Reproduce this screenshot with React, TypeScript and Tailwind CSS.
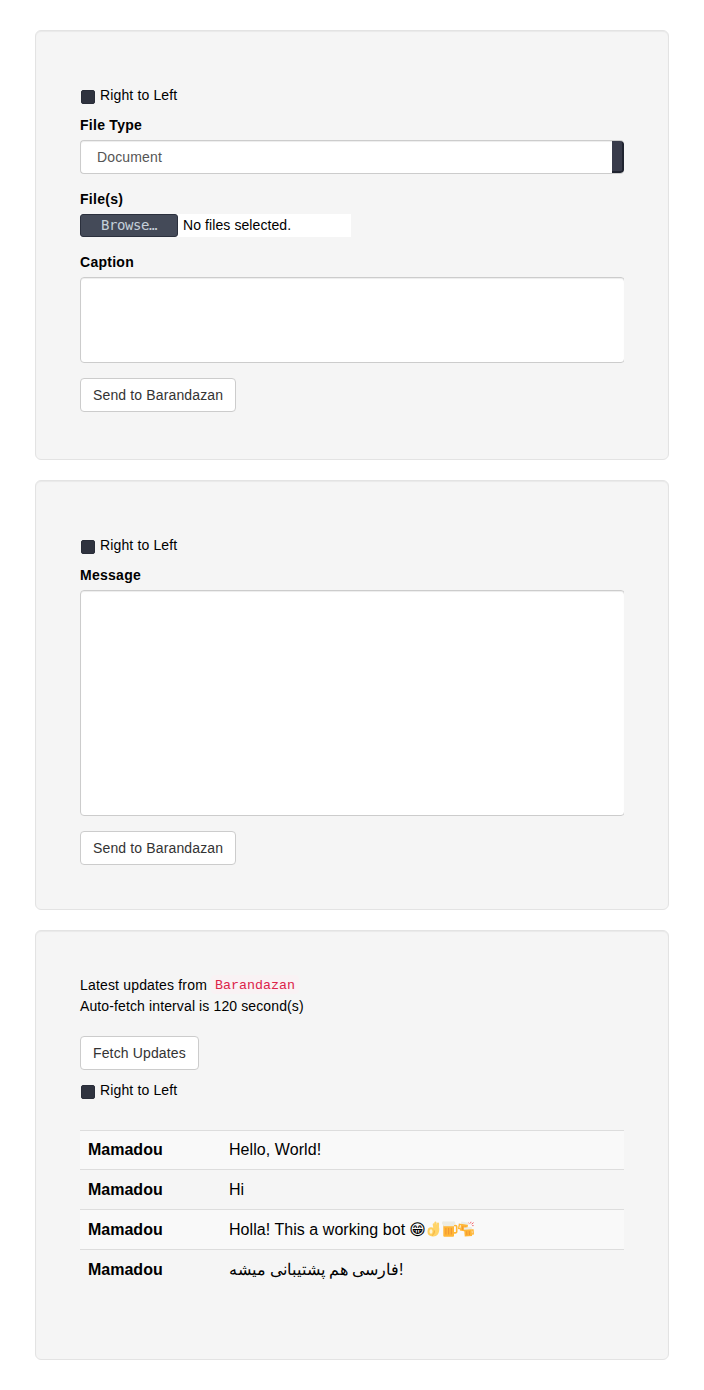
import type { ReactNode } from 'react';

function Card({ children }: { children: ReactNode }) {
  return (
    <section className="h-[430px] rounded-[6px] border border-[#e3e3e3] bg-[#f5f5f5] p-[44px] shadow-[inset_0_1px_1px_rgba(0,0,0,0.05)]">
      {children}
    </section>
  );
}

function Direction() {
  return (
    <div className="my-[10px] flex h-[20px]">
      <span className="mt-[5px] mr-[5px] ml-px size-[14px] rounded-[2px] border border-[#292d39] bg-[#2f333f]" />
      <span>Right to Left</span>
    </div>
  );
}

function Label({ children }: { children: ReactNode }) {
  return <div className="mb-[5px] font-bold tracking-[0.27px]">{children}</div>;
}

function Field({ height }: { height: string }) {
  return (
    <div className="mb-[15px] overflow-hidden">
      <div className={`${height} w-[545px] rounded-[4px] border border-[#ccc] bg-white shadow-[inset_0_1px_1px_rgba(0,0,0,0.075)]`} />
    </div>
  );
}

function Button({ children }: { children: ReactNode }) {
  return (
    <button className="block h-[34px] rounded-[4px] border border-[#ccc] bg-white px-[12px] tracking-[0.14px] text-[#333]">{children}</button>
  );
}

function OkHand() {
  return (
    <svg viewBox="0 0 16 16" className="size-[16px] shrink-0" role="img" aria-label="OK hand">
      <path
        d="M8.4 7.2L7.8 3.4M10.1 7L9.4 1.6M11.8 8L12 2.6"
        fill="none"
        stroke="#ffd469"
        strokeWidth="2.2"
        strokeLinecap="round"
      />
      <path d="M7.5 6.5h5.6c.6 3-.2 6.800-3.200 8.600-2 .9-4.900.6-6.200-1.200 2.300-1 4-3.500 3.800-7.400z" fill="#ffd469" />
      <ellipse cx="5" cy="10.500" rx="2.500" ry="3.300" fill="#fff3d0" stroke="#ffcf5c" strokeWidth="2" />
      <path d="M8.300 9.500c.3 2-.6 4-2.100 5" fill="none" stroke="#f0ad3d" strokeWidth=".9" />
    </svg>
  );
}

function BeerMug() {
  return (
    <svg viewBox="0 0 16 16" className="size-[16px] shrink-0" role="img" aria-label="Beer mug">
      <path d="M11.500 4.500h2a1.200 1.200 0 0 1 1.200 1.200v5a1.200 1.200 0 0 1-1.200 1.200h-2" fill="none" stroke="#ffb636" strokeWidth="1.600" />
      <path d="M1.300 4h10.700v10.700a1 1 0 0 1-1 1H2.300a1 1 0 0 1-1-1z" fill="#ffb636" />
      <path d="M3.900 7v6.500M6.600 7v6.500M9.300 7v6.500" stroke="#f19534" strokeWidth="1.100" />
      <path d="M2.400 .5h8.500a1.900 1.900 0 0 1 1.100 3.700v1H1.200V4A1.700 1.700 0 0 1 2.400.5z" fill="#ecece4" />
    </svg>
  );
}

function ClinkingMugs() {
  return (
    <svg viewBox="0 0 16 16" className="size-[16px] shrink-0" role="img" aria-label="Clinking beer mugs">
      <g transform="rotate(10 5 6)">
        <path d="M3 4H1v4.200h2" fill="none" stroke="#ffb636" strokeWidth="1.400" />
        <path d="M2.600 2.500h7v7.500h-7z" fill="#ffb636" />
        <path d="M4.800 5v4M7.200 5v4" stroke="#f19534" />
        <path d="M2.400.8h7.400v2.300H2.400z" fill="#ecece4" />
      </g>
      <g transform="rotate(-4 11 11)">
        <path d="M13.500 9.200h1.600v4h-1.600" fill="none" stroke="#ffb636" strokeWidth="1.400" />
        <path d="M6.400 8h7.400v7.300H6.400z" fill="#ffb636" />
        <path d="M8.700 10v4M11.300 10v4" stroke="#f19534" />
        <path d="M6.200 6.200h7.800v2.300H6.200z" fill="#ecece4" />
      </g>
      <path d="M10.500 1.800l1 .8M13 .8l-.5 1.500M15.600 1.600l-2 1.600M15.600 4.600h-1.400" stroke="#f2555b" strokeWidth=".9" />
    </svg>
  );
}

const updates: ReactNode[] = [
  <span className="tracking-[0.07px]">Hello, World!</span>,
  'Hi',
  <span className="flex">
    <span className="mr-[4px] tracking-[0.05px]">Holla! This a working bot</span>
    <span className="w-[16px] font-['DejaVu_Sans',sans-serif] text-[16px]">😁</span>
    <span className="mt-[2px] ml-[0.5px] flex h-[16px]">
      <OkHand />
      <BeerMug />
      <ClinkingMugs />
    </span>
  </span>,
  <span className="text-[15.75px] [word-spacing:-0.4px]">فارسی هم پشتیبانی میشه!</span>,
];

export default function App() {
  return (
    <main className="flex h-[1390px] flex-col gap-[20px] bg-white px-[35px] pt-[30px] font-['Liberation_Sans',sans-serif] text-[14px] leading-[20px] tracking-[0.14px] text-black">
      <Card>
        <Direction />
        <Label>File Type</Label>
        <div className="mb-[15px] overflow-hidden">
          <div className="flex h-[34px] w-[544px] overflow-hidden rounded-[4px] border border-r-0 border-[#ccc] bg-white shadow-[inset_0_1px_1px_rgba(0,0,0,0.075)]">
            <span className="flex-1 pt-[6px] pl-[16px] text-[#555]">Document</span>
            <span className="w-[12px] rounded-r-[3px] border-r-2 border-b-2 border-[#202430] bg-[#393c4b]" />
          </div>
        </div>
        <Label>File(s)</Label>
        <div className="mb-[15px] flex h-[23px] w-[271px] bg-white">
          <span className="h-[23px] w-[98px] rounded-[3px] border border-[#2b303d] bg-[#444a58] text-center font-['DejaVu_Sans_Mono',monospace] text-[14px] leading-[21px] tracking-[-0.4px] text-[#c5d0da]">
            Browse…
          </span>
          <span className="ml-[5px] leading-[22px] tracking-[0.09px]">No files selected.</span>
        </div>
        <Label>Caption</Label>
        <Field height="h-[86px]" />
        <Button>Send to Barandazan</Button>
      </Card>

      <Card>
        <Direction />
        <Label>Message</Label>
        <Field height="h-[226px]" />
        <Button>Send to Barandazan</Button>
      </Card>

      <Card>
        <div className="mb-[20px]">
          <div className="flex h-[21px]">
            <span className="tracking-[0.17px]">Latest updates from</span>
            <code className="ml-[4px] h-[19px] rounded-[4px] bg-[#f9f2f4] px-[4px] font-['Liberation_Mono',monospace] text-[13.333px] leading-[22px] tracking-normal text-[#dc2449]">
              Barandazan
            </code>
          </div>
          <div className="h-[20px] tracking-[0.12px]">Auto-fetch interval is 120 second(s)</div>
        </div>
        <Button>Fetch Updates</Button>
        <Direction />
        <div className="mt-[30px] text-[16px] leading-[22px] tracking-normal">
          {updates.map((message, index) => (
            <div
              key={index}
              className="flex h-[40px] border-t border-[#ddd] px-[8px] pt-[9px] first:h-[39px] first:pt-[8px] odd:bg-[#f9f9f9]"
            >
              <div className="w-[141px] font-bold">Mamadou</div>
              <div className="min-w-0 flex-1">{message}</div>
            </div>
          ))}
        </div>
      </Card>
    </main>
  );
}
